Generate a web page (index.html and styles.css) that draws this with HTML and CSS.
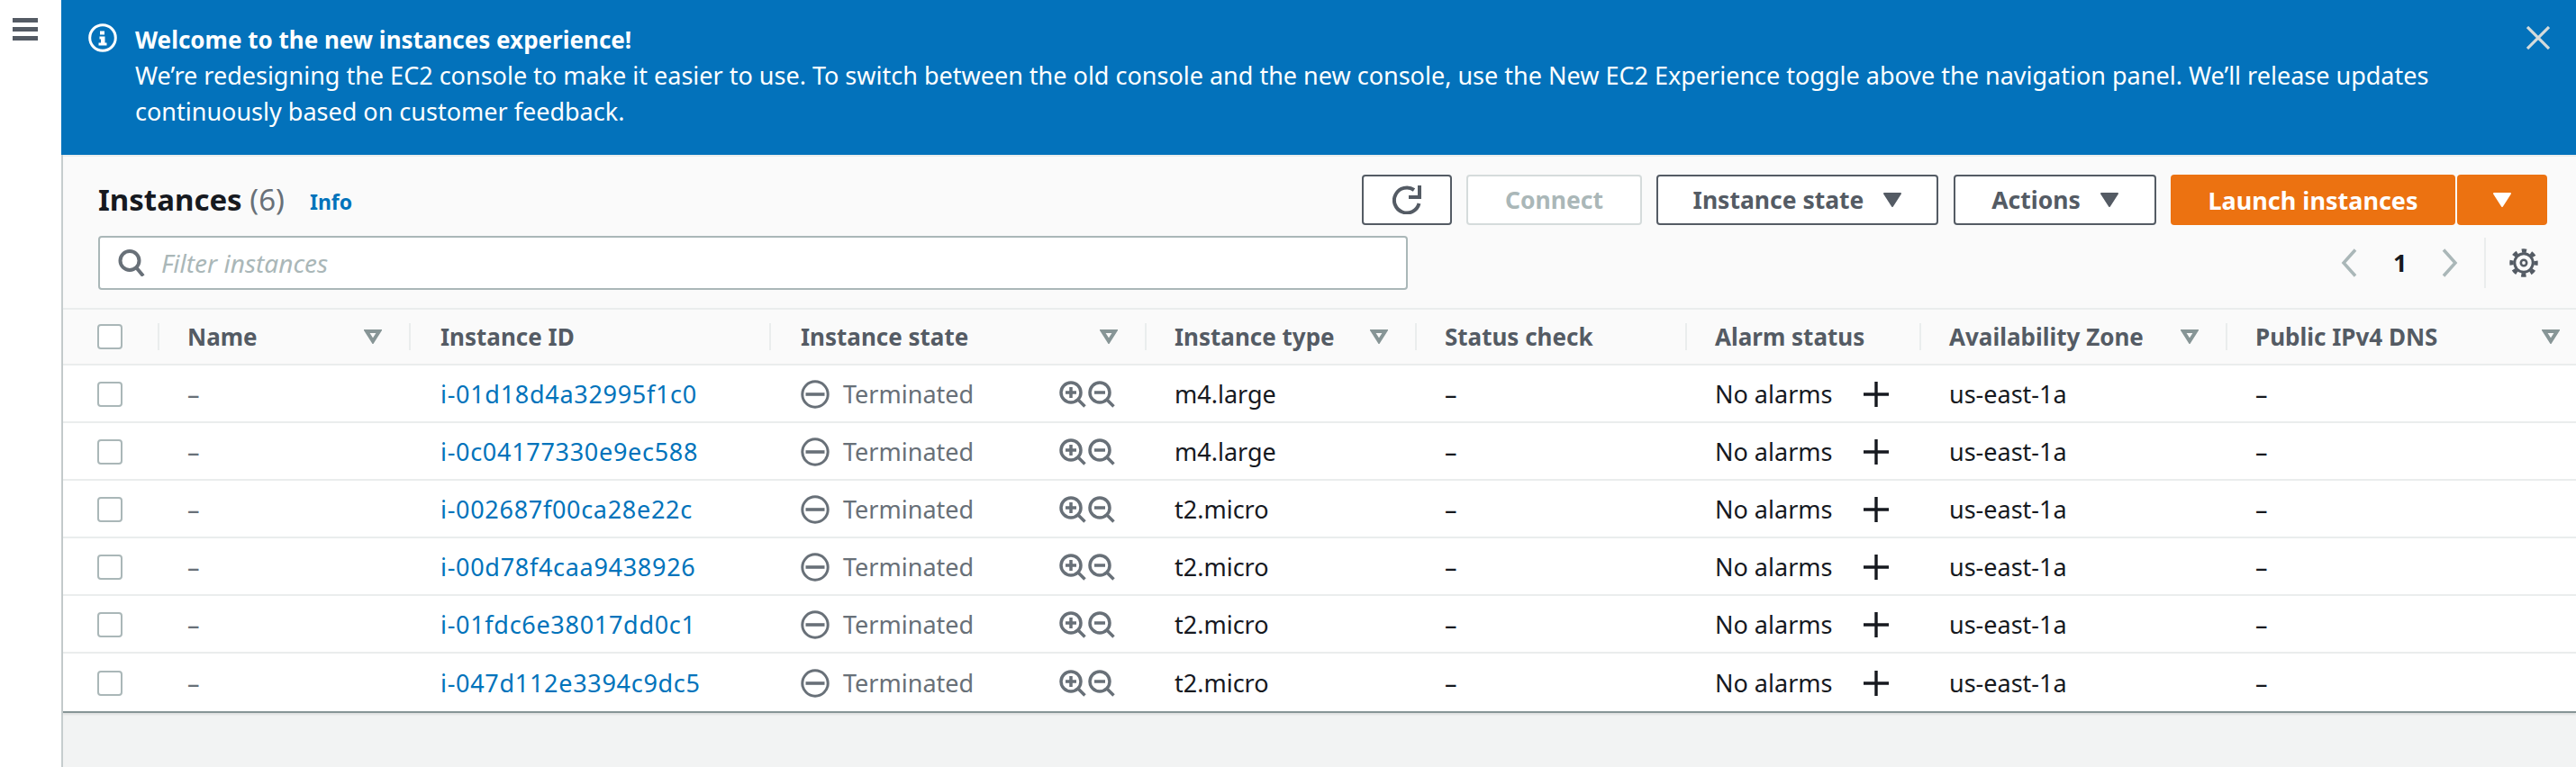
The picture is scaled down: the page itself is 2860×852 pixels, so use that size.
FILE: index.html
```html
<!DOCTYPE html>
<html lang="en">

<head>
  <meta charset="UTF-8">
  <meta name="viewport" content="width=device-width, initial-scale=1.0">
  <title>Instances | EC2 Management Console</title>
  <link rel="stylesheet" href="styles.css">
</head>

<body>
  <svg class="icon-defs" width="0" height="0">
    <symbol id="terminated" viewBox="0 0 32 32">
      <circle cx="16" cy="16" r="14.2" fill="none" stroke="currentColor" stroke-width="3"/>
      <path d="M5.500 16h21" fill="none" stroke="currentColor" stroke-width="3.600"/>
    </symbol>
    <symbol id="zoom-in" viewBox="0 0 30 30">
      <circle cx="13" cy="13" r="11" fill="none" stroke="currentColor" stroke-width="3.500"/>
      <path d="M20.500 20.500l8 8M7 13h12M13 7v12" fill="none" stroke="currentColor" stroke-width="3.500"/>
    </symbol>
    <symbol id="zoom-out" viewBox="0 0 30 30">
      <circle cx="13" cy="13" r="11" fill="none" stroke="currentColor" stroke-width="3.500"/>
      <path d="M20.500 20.500l8 8M7 13h12" fill="none" stroke="currentColor" stroke-width="3.500"/>
    </symbol>
    <symbol id="plus" viewBox="0 0 30 30">
      <path d="M15 1v28M1 15h28" fill="none" stroke="currentColor" stroke-width="3.400"/>
    </symbol>
    <symbol id="sort" viewBox="0 0 20 16">
      <path d="M3 2h14L10 13z" fill="none" stroke="currentColor" stroke-width="4"/>
    </symbol>
    <symbol id="caret" viewBox="0 0 20 16">
      <path d="M1 1h18L10 15z" fill="currentColor" stroke="currentColor" stroke-width="2" stroke-linejoin="round"/>
    </symbol>
  </svg>

  <div class="page">
    <aside class="side-nav">
      <div class="hamburger"><span></span><span></span><span></span></div>
    </aside>

    <main class="content">
      <section class="banner">
        <svg class="banner-icon" viewBox="0 0 32 32" width="32" height="32">
          <circle cx="16" cy="16" r="14.300" fill="none" stroke="#fff" stroke-width="3"/>
          <path d="M13 8.500h5v4h-5zM12.500 14.500h6v7h2v3h-9v-3h2.500v-4h-1.500z" fill="#fff"/>
        </svg>
        <div class="banner-text">
          <strong>Welcome to the new instances experience!</strong><br>
          We’re redesigning the EC2 console to make it easier to use. To switch between the old console and the new console, use the New EC2 Experience toggle above the navigation panel. We’ll release updates<br>
          continuously based on customer feedback.
        </div>
        <svg class="banner-close" viewBox="0 0 26 26" width="26" height="26">
          <path d="M1 1l24 24M25 1L1 25" fill="none" stroke="#d5dbdb" stroke-width="3.200"/>
        </svg>
      </section>

      <section class="toolbar">
        <div class="toolbar-row">
          <h1 class="title">Instances <span class="count">(6)</span></h1>
          <a class="info-link" href="#">Info</a>
          <div class="actions">
            <button class="btn btn-refresh">
              <svg viewBox="0 0 32 32" width="32" height="32">
                <path d="M29.500 20A14 14 0 1 1 24 5" fill="none" stroke="currentColor" stroke-width="4"/>
                <path d="M30 0v13H18" fill="none" stroke="currentColor" stroke-width="4"/>
              </svg>
            </button>
            <button class="btn btn-connect" disabled>Connect</button>
            <button class="btn btn-state">Instance state <svg class="caret"><use href="#caret"/></svg></button>
            <button class="btn btn-actions">Actions <svg class="caret"><use href="#caret"/></svg></button>
            <div class="split">
              <button class="btn-primary btn-launch">Launch instances</button>
              <button class="btn-primary btn-more"><svg class="caret"><use href="#caret"/></svg></button>
            </div>
          </div>
        </div>
        <div class="toolbar-row filter-row">
          <label class="filter">
            <svg viewBox="0 0 30 30" width="30" height="30">
              <circle cx="13" cy="12.500" r="10.500" fill="none" stroke="#687078" stroke-width="4"/>
              <path d="M20.500 20.500l7.500 9" fill="none" stroke="#687078" stroke-width="4"/>
            </svg>
            <input type="text" placeholder="Filter instances">
          </label>
          <div class="pager">
            <svg class="chev" viewBox="0 0 18 32" width="18" height="32"><path d="M16 1.500L3 16l13 14.500" fill="none" stroke="#aab7b8" stroke-width="3.500"/></svg>
            <span class="page-no">1</span>
            <svg class="chev" viewBox="0 0 18 32" width="18" height="32"><path d="M2 1.500L15 16 2 30.500" fill="none" stroke="#aab7b8" stroke-width="3.500"/></svg>
          </div>
          <div class="prefs">
            <svg viewBox="0 0 32 32" width="32" height="32">
              <circle cx="16" cy="16" r="3.200" fill="none" stroke="#545b64" stroke-width="2.600"/>
              <circle cx="16" cy="16" r="10.200" fill="none" stroke="#545b64" stroke-width="3"/>
              <circle cx="16" cy="16" r="13.500" fill="none" stroke="#545b64" stroke-width="4.400" stroke-dasharray="5.300 5.300" stroke-dashoffset="2.650"/>
            </svg>
          </div>
        </div>
      </section>

      <section class="grid">
        <div class="row head">
          <div class="cell check"><span class="box"></span></div>
          <div class="cell">Name<svg class="sort"><use href="#sort"/></svg></div>
          <div class="cell">Instance ID</div>
          <div class="cell">Instance state<svg class="sort"><use href="#sort"/></svg></div>
          <div class="cell">Instance type<svg class="sort"><use href="#sort"/></svg></div>
          <div class="cell">Status check</div>
          <div class="cell">Alarm status</div>
          <div class="cell">Availability Zone<svg class="sort"><use href="#sort"/></svg></div>
          <div class="cell last">Public IPv4 DNS<svg class="sort"><use href="#sort"/></svg></div>
        </div>

        <div class="row">
          <div class="cell check"><span class="box"></span></div>
          <div class="cell muted">–</div>
          <div class="cell"><a href="#">i-01d18d4a32995f1c0</a></div>
          <div class="cell state"><svg class="state-icon"><use href="#terminated"/></svg>Terminated<span class="zooms"><svg><use href="#zoom-in"/></svg><svg><use href="#zoom-out"/></svg></span></div>
          <div class="cell">m4.large</div>
          <div class="cell">–</div>
          <div class="cell">No alarms<svg class="plus"><use href="#plus"/></svg></div>
          <div class="cell">us-east-1a</div>
          <div class="cell">–</div>
        </div>
        <div class="row">
          <div class="cell check"><span class="box"></span></div>
          <div class="cell muted">–</div>
          <div class="cell"><a href="#">i-0c04177330e9ec588</a></div>
          <div class="cell state"><svg class="state-icon"><use href="#terminated"/></svg>Terminated<span class="zooms"><svg><use href="#zoom-in"/></svg><svg><use href="#zoom-out"/></svg></span></div>
          <div class="cell">m4.large</div>
          <div class="cell">–</div>
          <div class="cell">No alarms<svg class="plus"><use href="#plus"/></svg></div>
          <div class="cell">us-east-1a</div>
          <div class="cell">–</div>
        </div>
        <div class="row">
          <div class="cell check"><span class="box"></span></div>
          <div class="cell muted">–</div>
          <div class="cell"><a href="#">i-002687f00ca28e22c</a></div>
          <div class="cell state"><svg class="state-icon"><use href="#terminated"/></svg>Terminated<span class="zooms"><svg><use href="#zoom-in"/></svg><svg><use href="#zoom-out"/></svg></span></div>
          <div class="cell">t2.micro</div>
          <div class="cell">–</div>
          <div class="cell">No alarms<svg class="plus"><use href="#plus"/></svg></div>
          <div class="cell">us-east-1a</div>
          <div class="cell">–</div>
        </div>
        <div class="row">
          <div class="cell check"><span class="box"></span></div>
          <div class="cell muted">–</div>
          <div class="cell"><a href="#">i-00d78f4caa9438926</a></div>
          <div class="cell state"><svg class="state-icon"><use href="#terminated"/></svg>Terminated<span class="zooms"><svg><use href="#zoom-in"/></svg><svg><use href="#zoom-out"/></svg></span></div>
          <div class="cell">t2.micro</div>
          <div class="cell">–</div>
          <div class="cell">No alarms<svg class="plus"><use href="#plus"/></svg></div>
          <div class="cell">us-east-1a</div>
          <div class="cell">–</div>
        </div>
        <div class="row">
          <div class="cell check"><span class="box"></span></div>
          <div class="cell muted">–</div>
          <div class="cell"><a href="#">i-01fdc6e38017dd0c1</a></div>
          <div class="cell state"><svg class="state-icon"><use href="#terminated"/></svg>Terminated<span class="zooms"><svg><use href="#zoom-in"/></svg><svg><use href="#zoom-out"/></svg></span></div>
          <div class="cell">t2.micro</div>
          <div class="cell">–</div>
          <div class="cell">No alarms<svg class="plus"><use href="#plus"/></svg></div>
          <div class="cell">us-east-1a</div>
          <div class="cell">–</div>
        </div>
        <div class="row">
          <div class="cell check"><span class="box"></span></div>
          <div class="cell muted">–</div>
          <div class="cell"><a href="#">i-047d112e3394c9dc5</a></div>
          <div class="cell state"><svg class="state-icon"><use href="#terminated"/></svg>Terminated<span class="zooms"><svg><use href="#zoom-in"/></svg><svg><use href="#zoom-out"/></svg></span></div>
          <div class="cell">t2.micro</div>
          <div class="cell">–</div>
          <div class="cell">No alarms<svg class="plus"><use href="#plus"/></svg></div>
          <div class="cell">us-east-1a</div>
          <div class="cell">–</div>
        </div>
      </section>
    </main>
  </div>
</body>

</html>
```

FILE: styles.css
```css
body {
  margin: 0;
  padding: 0;
  font-family: "Noto Sans", Roboto, sans-serif;
  font-size: 27px;
  line-height: 40px;
  color: #16191f;
  background-color: #fff;
}

.icon-defs {
  display: block;
  height: 0;
}

.page {
  display: flex;
  height: 852px;
  overflow: hidden;
}

.side-nav {
  width: 68px;
  flex-shrink: 0;
  box-sizing: border-box;
  padding: 20px 14px;
}

.hamburger {
  display: flex;
  flex-direction: column;
  gap: 5px;
  width: 28px;
}

.hamburger span {
  height: 5px;
  background-color: #545b64;
}

.content {
  flex: 1;
  min-width: 0;
  border-left: 2px solid #c6cdce;
  background-color: #f2f3f3;
}

.banner {
  display: flex;
  box-sizing: border-box;
  height: 172px;
  margin-left: -2px;
  padding: 24px 29px 0 30px;
  background-color: #0372bb;
  color: #fff;
}

.banner-icon {
  flex-shrink: 0;
  margin: 2px 20px 0 0;
}

.banner-text {
  flex: 1;
  white-space: nowrap;
}

.banner-text strong {
  font-size: 26px;
}

.banner-close {
  flex-shrink: 0;
  margin-top: 5px;
}

.toolbar {
  box-sizing: border-box;
  height: 170px;
  padding: 20px 32px 0 39px;
  background-color: #fafafa;
  border-top: 2px solid #eaeded;
}

.toolbar-row {
  display: flex;
  align-items: center;
  height: 56px;
}

.title {
  margin: 0;
  font-size: 33px;
  font-weight: 700;
  line-height: 44px;
}

.count {
  font-weight: 400;
  color: #687078;
}

.info-link {
  margin: 4px 0 0 28px;
  font-size: 23px;
  font-weight: 700;
  color: #0073bb;
  text-decoration: none;
}

.actions {
  display: flex;
  margin-left: auto;
  gap: 16px;
}

.btn {
  display: flex;
  align-items: center;
  justify-content: center;
  box-sizing: border-box;
  height: 56px;
  padding: 0;
  gap: 22px;
  font: 700 26.500px "Noto Sans", Roboto, sans-serif;
  color: #545b64;
  background-color: #fff;
  border: 2px solid #545b64;
  border-radius: 4px;
}

.btn-refresh {
  width: 100px;
}

.btn-connect {
  width: 195px;
  color: #aab7b8;
  border-color: #d5dbdb;
}

.btn-state {
  width: 313px;
}

.btn-actions {
  width: 225px;
  margin-left: 1px;
}

.caret {
  width: 20px;
  height: 16px;
}

.split {
  display: flex;
  gap: 2px;
}

.btn-primary {
  display: flex;
  align-items: center;
  justify-content: center;
  height: 56px;
  padding: 0;
  font: 700 27px "Noto Sans", Roboto, sans-serif;
  color: #fff;
  background-color: #ec7211;
  border: none;
  border-radius: 4px;
}

.btn-launch {
  width: 316px;
}

.btn-more {
  width: 100px;
}

.filter-row {
  height: 60px;
  margin-top: 12px;
}

.filter {
  display: flex;
  align-items: center;
  box-sizing: border-box;
  width: 1454px;
  height: 60px;
  padding: 0 20px;
  gap: 18px;
  background-color: #fff;
  border: 2px solid #aab7b8;
  border-radius: 4px;
}

.filter input {
  flex: 1;
  border: none;
  outline: none;
  padding: 0;
  font: italic 28px "Noto Sans", Roboto, sans-serif;
  background: transparent;
}

.filter input::placeholder {
  color: #aab7b8;
  opacity: 1;
}

.pager {
  display: flex;
  align-items: center;
  margin-left: auto;
  gap: 40px;
}

.page-no {
  font-weight: 700;
  width: 14px;
}

.prefs {
  display: flex;
  align-items: center;
  height: 56px;
  margin-left: 29px;
  padding: 0 10px 0 26px;
  border-left: 2px solid #eaeded;
}

.grid {
  border-bottom: 2px solid #879596;
  box-shadow: 0 2px 2px rgba(0, 0, 0, 0.08);
  background-color: #fff;
}

.row {
  display: grid;
  grid-template-columns: 105px 279px 400px 417px 300px 300px 260px 340px 389px;
  height: 64px;
  box-sizing: border-box;
  border-bottom: 2px solid #eaeded;
}

.row:last-child {
  border-bottom: none;
}

.cell {
  display: flex;
  align-items: center;
  box-sizing: border-box;
  padding: 2px 33px 0;
  white-space: nowrap;
}

.cell:nth-child(3),
.cell:nth-child(4) {
  padding-left: 35px;
}

.cell.check {
  padding-left: 38px;
}

.box {
  box-sizing: border-box;
  width: 28px;
  height: 28px;
  background-color: #fff;
  border: 2px solid #aab7b8;
  border-radius: 4px;
}

.cell.muted {
  color: #687078;
}

.cell a {
  color: #0073bb;
  text-decoration: none;
  letter-spacing: 0.700px;
}

.head {
  background-color: #fafafa;
  border-top: 2px solid #eaeded;
  height: 64px;
  font-size: 26px;
  font-weight: 700;
  color: #545b64;
}

.head .cell {
  position: relative;
  padding: 0 30px 0 33px;
}

.head .cell.check {
  padding-left: 38px;
}

.head .cell:nth-child(3),
.head .cell:nth-child(4) {
  padding-left: 35px;
}

.head .cell + .cell::before {
  content: "";
  position: absolute;
  left: 0;
  top: 15px;
  height: 30px;
  border-left: 2px solid #eaeded;
}

.head .cell.last {
  padding-right: 18px;
}

.sort {
  width: 20px;
  height: 16px;
  margin-left: auto;
  color: #879596;
}

.state {
  color: #687078;
}

.state-icon {
  flex-shrink: 0;
  width: 32px;
  height: 32px;
  margin-right: 15px;
}

.zooms {
  display: flex;
  margin-left: auto;
  gap: 2px;
}

.zooms svg {
  width: 30px;
  height: 30px;
}

.plus {
  width: 30px;
  height: 30px;
  margin-left: auto;
}
```
